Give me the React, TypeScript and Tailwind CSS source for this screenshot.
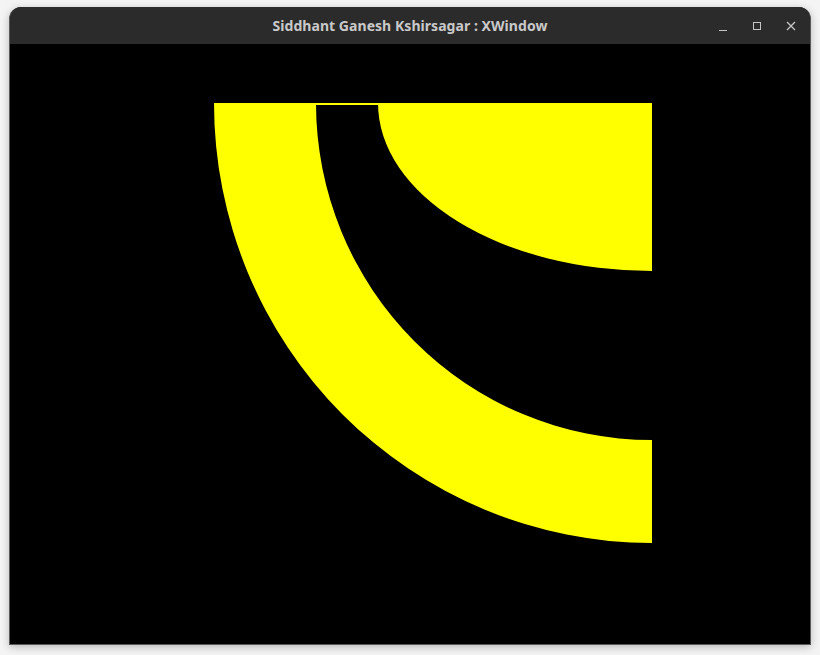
import React from "react";

export default function App() {
  return (
    <div className="w-[820px] h-[655px] bg-[#f4f4f4] pt-[7px] pl-[9px] overflow-hidden">
      <div className="w-[802px] rounded-t-[12px] overflow-hidden border-x border-b border-[#5a5a5a] shadow-[0_2px_8px_rgba(0,0,0,0.25)] bg-[#2b2b2b]">
        <div className="relative h-[37px] flex items-center justify-center bg-[#2b2b2b]">
          <span
            className="text-[14px] font-bold text-[#c9c9c9] tracking-[0.05px]"
            style={{ fontFamily: '"Noto Sans", "DejaVu Sans", sans-serif' }}
          >
            Siddhant Ganesh Kshirsagar : XWindow
          </span>
          <div className="absolute right-0 top-0 h-full flex items-center">
            <svg width="12" height="12" viewBox="0 0 12 12" className="mr-[22px]">
              <line x1="2" y1="10.5" x2="10" y2="10.5" stroke="#c4c4c4" strokeWidth="1" />
            </svg>
            <svg width="12" height="12" viewBox="0 0 12 12" className="mr-[22px]">
              <rect x="2.5" y="2.5" width="7" height="7" fill="none" stroke="#c4c4c4" strokeWidth="1" />
            </svg>
            <svg width="12" height="12" viewBox="0 0 12 12" className="mr-[13px]">
              <line x1="2" y1="2" x2="10" y2="10" stroke="#c4c4c4" strokeWidth="1.2" />
              <line x1="10" y1="2" x2="2" y2="10" stroke="#c4c4c4" strokeWidth="1.2" />
            </svg>
          </div>
        </div>
        <div className="w-[800px] h-[600px] bg-black">
          <svg width="800" height="600" viewBox="0 0 800 600">
            <path
              d="M 204 59 A 438 440 0 0 0 642 499 L 642 396 A 336 337 0 0 1 306 59 Z"
              fill="#ffff00"
            />
            <rect x="306" y="59" width="62" height="2" fill="#ffff00" />
            <path d="M 368 59 A 274 168 0 0 0 642 227 L 642 59 Z" fill="#ffff00" />
          </svg>
        </div>
      </div>
    </div>
  );
}
